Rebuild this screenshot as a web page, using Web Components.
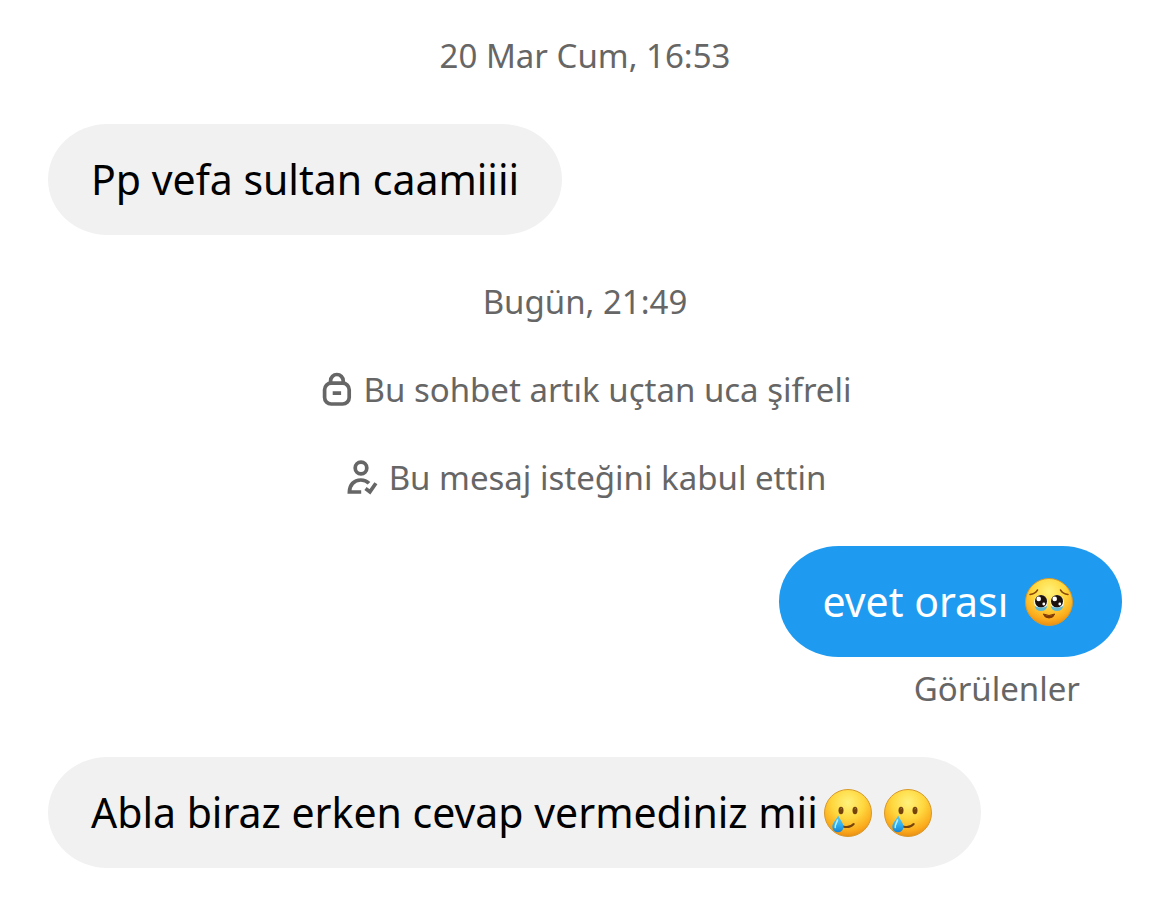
<!DOCTYPE html>
<html lang="tr">
<head>
<meta charset="utf-8">
<meta name="viewport" content="width=device-width, initial-scale=1">
<title>Sohbet</title>
<style>
	body {
		margin: 0;
		background: #fff;
		color: #000;
		font-family: "Noto Sans", "Open Sans", sans-serif;
	}
</style>
</head>
<body>
<chat-thread>
	<chat-stamp>20 Mar Cum, 16:53</chat-stamp>
	<chat-bubble>Pp vefa sultan caamiiii</chat-bubble>
	<chat-stamp>Bugün, 21:49</chat-stamp>
	<chat-notice icon="lock">Bu sohbet artık uçtan uca şifreli</chat-notice>
	<chat-notice icon="accepted">Bu mesaj isteğini kabul ettin</chat-notice>
	<chat-bubble sent>evet orası <chat-emoji name="pleading"></chat-emoji><span slot="receipt">Görülenler</span></chat-bubble>
	<chat-bubble>Abla biraz erken cevap vermediniz mii<chat-emoji name="tear"></chat-emoji><chat-emoji name="tear"></chat-emoji></chat-bubble>
</chat-thread>

<script>
function attach(element, html) {
	const template = document.createElement('template');
	template.innerHTML = html;
	const shadowRoot = element.attachShadow({mode: 'open'});
	shadowRoot.append(template.content.cloneNode(true));
}

class ChatThread extends HTMLElement {
	constructor() {
		super();
		attach(this, `
			<style>
				:host {
					display: block;
				}
				main {
					display: flex;
					flex-direction: column;
					gap: 46px;
					padding: 35px 48px 28px;
				}
			</style>
			<main><slot></slot></main>
		`);
	}
}

class ChatStamp extends HTMLElement {
	constructor() {
		super();
		attach(this, `
			<style>
				:host {
					display: block;
					color: #666;
					font-size: 33px;
					line-height: 42px;
					text-align: center;
				}
			</style>
			<time><slot></slot></time>
		`);
	}
}

const noticeIcons = {
	lock: `
		<rect x="6.6" y="11.2" width="24.6" height="20.8" rx="6.6"/>
		<path d="M12.600 11.500V8.800a6.300 6.300 0 0 1 12.600 0V11.500M14.700 21.200h8.400"/>
	`,
	accepted: `
		<circle cx="17" cy="8" r="5.8"/>
		<path d="M17.200 32H5.400C5.600 25 9.800 20 16.800 20c3.200 0 6 1 8.200 3.300"/>
		<path d="M21.500 28.500l4.400 3.300 6-8.600"/>
	`
};

class ChatNotice extends HTMLElement {
	constructor() {
		super();
		attach(this, `
			<style>
				:host {
					display: flex;
					align-items: center;
					justify-content: center;
					gap: 9px;
					color: #666;
					font-size: 33px;
					line-height: 42px;
				}
				svg {
					flex: none;
					fill: none;
					stroke: currentColor;
					stroke-width: 3.7;
				}
			</style>
			<svg width="36" height="36" viewBox="0 0 36 36" aria-hidden="true">${noticeIcons[this.getAttribute('icon')]}</svg>
			<span><slot></slot></span>
		`);
	}
}

class ChatBubble extends HTMLElement {
	constructor() {
		super();
		attach(this, `
			<style>
				:host {
					display: flex;
					flex-direction: column;
					align-items: flex-start;
					gap: 11px;
					margin-top: 1px;
				}
				:host([sent]) {
					align-items: flex-end;
				}
				.bubble {
					background: #f1f1f1;
					border-radius: 60px / 56px;
					padding: 28px 43px 29px;
					font-size: 41px;
					line-height: 54px;
				}
				:host([sent]) .bubble {
					background: #1e9bf0;
					color: #fff;
				}
				slot[name="receipt"] {
					color: #666;
					font-size: 33px;
					line-height: 42px;
				}
				::slotted(span) {
					margin-right: 42px;
				}
			</style>
			<div class="bubble"><slot></slot></div>
			<slot name="receipt"></slot>
		`);
	}
}

const emojiFaces = {
	pleading: {
		label: '🥹',
		art: `
			<g fill="none" stroke="#8a4a0c" stroke-width="1.5" stroke-linecap="round">
				<path d="M5 16.500q5-.5 7.500-4.500M43 16.500q-5-.5-7.500-4.500"/>
			</g>
			<ellipse cx="15.800" cy="24.500" rx="6.600" ry="7.500" fill="#fff"/>
			<ellipse cx="32.200" cy="24.500" rx="6.600" ry="7.500" fill="#fff"/>
			<ellipse cx="16" cy="23.300" rx="6" ry="6.300" fill="#1c120d"/>
			<ellipse cx="32" cy="23.300" rx="6" ry="6.300" fill="#1c120d"/>
			<path d="M9.800 28q6.200 3.500 12.400 0q-.8 5-6.200 5t-6.200-5M25.800 28q6.200 3.500 12.400 0q-.8 5-6.200 5t-6.200-5" fill="#62b9d2"/>
			<g fill="#fff">
				<circle cx="13.700" cy="20.900" r="2.300"/>
				<circle cx="29.700" cy="20.900" r="2.300"/>
				<circle cx="18.800" cy="26" r="1.400"/>
				<circle cx="34.800" cy="26" r="1.400"/>
			</g>
			<path d="M18.300 36q5.700 3 11.400 0q-1.300 4-5.700 4t-5.700-4z" fill="#7d3905" stroke="#7d3905" stroke-linejoin="round"/>
		`
	},
	tear: {
		label: '🥲',
		art: `
			<ellipse cx="17" cy="21.500" rx="2.500" ry="3.700" fill="#74420b"/>
			<ellipse cx="31" cy="21.500" rx="2.500" ry="3.700" fill="#74420b"/>
			<path d="M16.500 20q.8-1 1.500 0M30.500 20q.8-1 1.500 0" fill="none" stroke="#b4803c"/>
			<path d="M19 37.500q6.500 2 10.700-2.500" fill="none" stroke="#74420b" stroke-width="2" stroke-linecap="round"/>
			<path d="M14.200 26.500c1.800 4.200 5.300 7.500 5.300 11.200a5.600 5.600 0 0 1-11.200 0c0-3.700 4.100-7 5.900-11.200z" fill="url(#drop)"/>
			<path d="M13.500 31c-.6 3-2.700 4.500-2.300 7.500" fill="none" stroke="#b8efff" stroke-width="1.5" stroke-linecap="round"/>
		`
	}
};

class ChatEmoji extends HTMLElement {
	constructor() {
		super();
		const face = emojiFaces[this.getAttribute('name')];
		attach(this, `
			<style>
				:host {
					display: inline-block;
					vertical-align: -9px;
					height: 48px;
				}
				svg {
					display: block;
				}
			</style>
			<svg width="60" height="48" viewBox="-6 0 60 48" role="img" aria-label="${face.label}">
				<defs>
					<radialGradient id="skin" cx=".5" cy=".28" r=".74">
						<stop offset="0" stop-color="#fff27c"/>
						<stop offset=".45" stop-color="#ffd83f"/>
						<stop offset=".8" stop-color="#fbac1d"/>
						<stop offset="1" stop-color="#e98912"/>
					</radialGradient>
					<linearGradient id="drop" x2="0" y2="1">
						<stop offset="0" stop-color="#5ac6ef"/>
						<stop offset=".5" stop-color="#35b4f0"/>
						<stop offset="1" stop-color="#1684d3"/>
					</linearGradient>
				</defs>
				<circle cx="24" cy="24" r="23.5" fill="url(#skin)" stroke="#d7992b"/>
				${face.art}
			</svg>
		`);
	}
}

customElements.define('chat-thread', ChatThread);
customElements.define('chat-stamp', ChatStamp);
customElements.define('chat-notice', ChatNotice);
customElements.define('chat-bubble', ChatBubble);
customElements.define('chat-emoji', ChatEmoji);
</script>
</body>
</html>
